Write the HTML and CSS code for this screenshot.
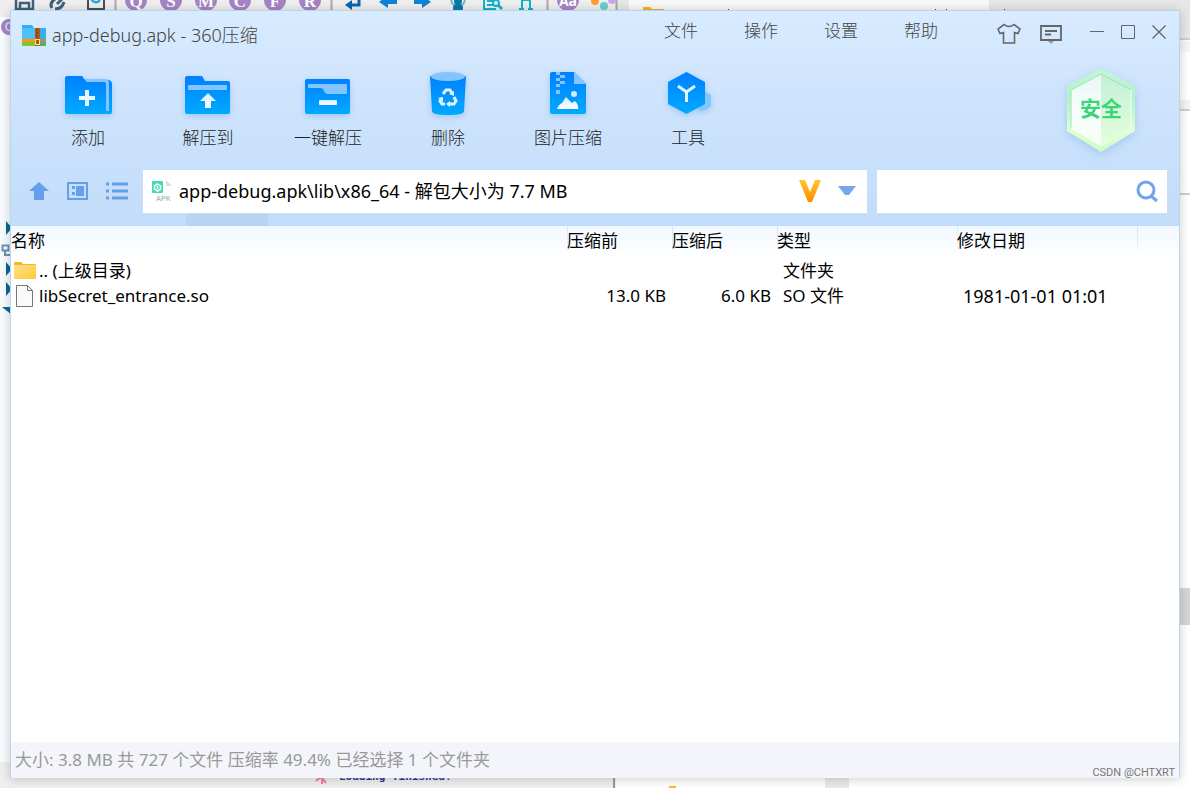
FILE: index.html
```html
<!DOCTYPE html>
<html lang="zh-CN">
<head>
<meta charset="utf-8">
<title>app-debug.apk - 360压缩</title>
<link rel="stylesheet" href="styles.css">
</head>
<body>
<div class="backdrop" aria-hidden="true">
  <svg class="backdrop-top" width="1190" height="400" viewBox="0 0 1190 400">
    <rect width="616" height="17" fill="#efefef"/>
    <rect y="17" width="616" height="383" fill="#f8fcff"/>
    <rect x="616" width="574" height="10" fill="#e7e7e7"/>
    <rect x="629" y="-6" width="360" height="24" rx="5" fill="#f8f8f8"/>
    <rect x="1172" width="18" height="38" fill="#e7e7e7"/>
    <path d="M1172 39h18M1172 110h18M1172 194h18" stroke="#cfcfcf" stroke-width="2"/>
    <rect x="1172" y="41" width="18" height="11" fill="#f6f6f6"/>
    <rect x="1172" y="100" width="18" height="9" fill="#f4f4f4"/>
    <path d="M115.500 0v10M331.500 0v10M547.500 0v10M616.500 0v10" stroke="#a8a8a8" stroke-width="2"/>
    <path d="M16 -6v15h17V-6M20 9V3h9v6" fill="none" stroke="#41617a" stroke-width="2.500"/>
    <path d="M52 8q-3-5 3-9M55 9q7 0 9-7M57 4l5-5" fill="none" stroke="#41617a" stroke-width="3"/>
    <path d="M88 0v9h16V0" fill="none" stroke="#454f58" stroke-width="2"/>
    <path d="M91-2a5 5 0 0 0 9 2" fill="none" stroke="#36a3df" stroke-width="2.500"/>
    <g fill="#a684c4"><circle cx="136" cy="0" r="11"/><circle cx="171" cy="0" r="11"/><circle cx="206" cy="0" r="11"/><circle cx="240" cy="0" r="11"/><circle cx="275" cy="0" r="11"/><circle cx="310" cy="0" r="11"/><circle cx="568" cy="0" r="11"/><circle cx="9" cy="27" r="8"/></g>
    <path d="M12 24q-5-3-6 2 0 6 6 4" fill="none" stroke="#e9dcf8" stroke-width="1.500"/>
    <g class="glyphs" text-anchor="middle"><text x="136" y="7">Q</text><text x="171" y="7">S</text><text x="206" y="7">M</text><text x="240" y="7">C</text><text x="275" y="7">F</text><text x="310" y="7">R</text><text class="glyph-aa" x="568" y="6">Aa</text></g>
    <path d="M359-4v9h-9" fill="none" stroke="#0867ae" stroke-width="3"/><path d="M345 5l7-5v10z" fill="#0867ae"/>
    <path d="M379 2l9-7v4h9v5h-9v4z" fill="#0c83d8"/><path d="M431 2l-9-7v4h-8v5h8v4z" fill="#0c83d8"/>
    <circle cx="458" cy="1" r="4" fill="#067ba6"/><path d="M451-1q1 6 4 6M465-1q-1 6-4 6" fill="none" stroke="#70b5ce" stroke-width="2"/><rect x="453" y="4" width="10" height="8" rx="4" fill="#067ba6"/>
    <path d="M484-4v13h12M487 1h7M487 5h7M522 10V0h8v10M519 9h5M528 9h5" fill="none" stroke="#12b4cb" stroke-width="2"/><circle cx="496" cy="3" r="3" fill="none" stroke="#12b4cb" stroke-width="2"/><path d="M498 5l4 4" stroke="#12b4cb" stroke-width="3"/>
    <circle cx="595" cy="1" r="4" fill="#ffa02f"/><circle cx="604" cy="6" r="4" fill="#67cfcc"/><circle cx="612" cy="0" r="4" fill="#cca6ed"/>
    <path d="M643 7h7l2 2h12v3h-21z" fill="#f3b425"/>
    <path d="M728 9.500h1M935 9.500h1M946 9.500h1M1004 9.500h1" stroke="#444"/>
    <path d="M6 221l6 7-6 7zM6 262l6 7-6 7zM6 282l6 7-6 7zM2 307h10v8z" fill="#0b6894"/>
    <path d="M2.500 245.500h6v5h-6zM5 251v4h6" fill="none" stroke="#6d91b4" stroke-width="2"/>
  </svg>
  <svg class="backdrop-bottom" width="1190" height="26" viewBox="0 0 1190 26">
    <rect width="616" height="26" fill="#efefef"/><rect x="616" width="574" height="26" fill="#fff"/>
    <path d="M614 10v16" stroke="#9b9b9b" stroke-width="2"/>
    <rect x="825" width="24" height="26" fill="#e9e9e9"/>
    <path d="M669 24h7v2h-7z" fill="#ffb91d"/>
    <path d="M314 14h16M316 19l11-9M317 10l9 11M322 8v14" stroke="#f77ca5" stroke-width="2"/>
    <text class="console-text" x="339" y="18">Loading finished!</text>
  </svg>
  <i class="backdrop-thumb"></i>
</div>
<main class="window">
  <header class="titlebar">
    <svg width="24" height="22" viewBox="0 0 24 22">
      <path d="M0 1h10l2 3h12v12H0z" fill="#35aef0"/><path d="M0 4h24v11H0z" fill="#4cc1f7"/><path d="M0 16h24v6H0z" fill="#7cc72e"/><path d="M0 15h24v3H0z" fill="#ff9418"/><path d="M13 4h5v18h-5z" fill="#b25a12"/><path d="M18 4h6v18h-6z" fill="#1588d8" opacity=".35"/><path d="M15 5v12" stroke="#70310b" stroke-width="1" stroke-dasharray="2 1"/><rect x="13.500" y="15.500" width="4" height="5" fill="#a65c0d" stroke="#ffe58a"/>
    </svg>
    <h1>app-debug.apk - 360压缩</h1>
    <nav class="menu"><button>文件</button><button>操作</button><button>设置</button><button>帮助</button></nav>
    <div class="window-tools">
      <button aria-label="皮肤"><svg width="24" height="22" viewBox="0 0 24 22"><path d="M6.500 9.500 3 10.500 1 6l6-4.500q5 4 10 0L23 6l-2 4.500-3.500-1V20h-11z" fill="none" stroke="#666" stroke-width="1.600"/></svg></button>
      <button aria-label="反馈"><svg width="22" height="20" viewBox="0 0 22 20"><path d="M1 2h20v14H1z" fill="none" stroke="#666" stroke-width="1.800"/><path d="M8 17h6l-3 3z" fill="#999"/><path d="M5 7h12M5 10.500h6" stroke="#666" stroke-width="2"/></svg></button>
    </div>
    <div class="window-controls">
      <button aria-label="最小化"><svg width="16" height="16" viewBox="0 0 16 16"><path d="M1 7.500h14" stroke="#666"/></svg></button>
      <button aria-label="最大化"><svg width="16" height="16" viewBox="0 0 16 16"><path d="M1.500 1.500h13v13h-13z" fill="none" stroke="#666"/></svg></button>
      <button aria-label="关闭"><svg width="16" height="16" viewBox="0 0 16 16"><path d="M1.500 1.500l13 13M14.500 1.500l-13 13" stroke="#666" stroke-width="1.300"/></svg></button>
    </div>
  </header>
  <section class="toolbar">
    <svg class="defs" width="0" height="0"><defs>
      <linearGradient id="blue" x2="0" y2="1"><stop stop-color="#0080ff"/><stop offset="1" stop-color="#00aaff"/></linearGradient>
      <linearGradient id="pale" x2="0" y2="1"><stop stop-color="#d0edff"/><stop offset="1" stop-color="#fff"/></linearGradient>
      <linearGradient id="gold" x2="0" y2="1"><stop stop-color="#ffc62e"/><stop offset="1" stop-color="#ff8a00"/></linearGradient>
      <linearGradient id="folder" x2="1" y2="1"><stop stop-color="#ffe18a"/><stop offset="1" stop-color="#ffca3a"/></linearGradient>
      <linearGradient id="rim" x2="0" y2="1"><stop stop-color="#c4f5da"/><stop offset=".35" stop-color="#b2f2cb"/><stop offset=".75" stop-color="#deffd2"/><stop offset="1" stop-color="#cffbc5"/></linearGradient>
      <linearGradient id="faceleft" x2="0" y2="1"><stop stop-color="#e8f7f4"/><stop offset=".5" stop-color="#f7fdfb"/><stop offset="1" stop-color="#f6fff4"/></linearGradient>
      <linearGradient id="faceright" x2="0" y2="1"><stop stop-color="#c2efdc"/><stop offset="1" stop-color="#e5ffd9"/></linearGradient>
    </defs></svg>
    <button><svg width="48" height="48" viewBox="0 0 48 48"><path d="M1 8q0-2 2-2h15l3 4h24q3 1 3 4v28q0 2-2 2H3q-2 0-2-2z" fill="url(#blue)"/><path d="M21 9h20q4 0 4 4v28h-3V14q0-2-2-2H22z" fill="#83c5ff"/><path d="M23 20v16M15 28h16" stroke="#e6f7ff" stroke-width="4"/></svg><span>添加</span></button>
    <button><svg width="48" height="48" viewBox="0 0 48 48"><path d="M1 8q0-2 2-2h15l3 5h23q2 0 2 2v29q0 2-2 2H3q-2 0-2-2z" fill="url(#blue)"/><path d="M4 16q0-1 1-1h37q1 0 1 1v4H4z" fill="#83c5ff"/><path d="M24 23l8 8h-5v7h-6v-7h-5z" fill="url(#pale)"/></svg><span>解压到</span></button>
    <button><svg width="48" height="48" viewBox="0 0 48 48"><rect x="1" y="9" width="45" height="35" rx="2" fill="url(#blue)"/><path d="M4 15q0-1 1-1h37q1 0 1 1v9H24q-3 0-4-3-1-3-4-3H4z" fill="#83c5ff"/><rect x="15" y="30" width="18" height="5" rx="1" fill="url(#pale)"/></svg><span>一键解压</span></button>
    <button><svg width="48" height="48" viewBox="0 0 48 48"><path d="M6 6h36l-2 35q0 4-16 4T8 41z" fill="url(#blue)"/><ellipse cx="24" cy="6.500" rx="17" ry="4.500" fill="#83c5ff"/><g fill="none" stroke="#dff4ff" stroke-width="3"><path d="M19 24l3-4h4l2 3M30 27l2 4-2 3h-4M21 34h-3l-2-3 2-3"/></g><path d="M25 24l5-3v5zM26 31v6l-4-3zM14 28l5-1v5z" fill="#dff4ff"/></svg><span>删除</span></button>
    <button><svg width="48" height="48" viewBox="0 0 48 48"><path d="M6 4q0-2 2-2h22l12 12v28q0 2-2 2H8q-2 0-2-2z" fill="url(#blue)"/><path d="M30 2l12 12H30z" fill="#83c5ff"/><path d="M12 2h4v3h5v3h-5v3h5v3h-5v3h-4v-3h4v-3h-4V8h4V5h-4zM12 20h4v4h-4z" fill="#83c5ff"/><circle cx="30" cy="24" r="3" fill="#c8edff"/><path d="M13 39q1-4 5-6l4-6 6 6 3-2q4 4 3 8z" fill="url(#pale)"/></svg><span>图片压缩</span></button>
    <button><svg width="48" height="48" viewBox="0 0 48 48"><path d="M41 22q6 2 6 4v8q0 3-4 5-5 3-9 1-1-2 3-4 4-2 4-6z" fill="#83c5ff"/><path d="M22.500 2 41 12v22L22.500 44 4 34V12z" fill="url(#blue)"/><path d="M14 16l8.500 6L31 16M22.500 22v10" fill="none" stroke="#dff4ff" stroke-width="3"/></svg><span>工具</span></button>
    <div class="badge"><svg width="70" height="86" viewBox="0 0 70 86"><path d="M35 1l34 18v45L35 85 1 64V19z" fill="url(#rim)"/><path d="M35 7 5 23v38l30 18z" fill="url(#faceleft)"/><path d="M35 7l30 16v38L35 79z" fill="url(#faceright)"/><path d="M5 61V23L35 7l30 16" fill="none" stroke="#9de5ae" stroke-width="1"/><path d="M65 23v38L35 79 5 61" fill="none" stroke="#f5fff2" stroke-width="1"/></svg><strong>安全</strong></div>
  </section>
  <section class="navigation">
    <div class="view-buttons">
      <button aria-label="上级目录"><svg width="22" height="20" viewBox="0 0 22 20"><path d="M11 1l10 9h-5v9H6v-9H1z" fill="#659eea"/></svg></button>
      <button aria-label="预览视图"><svg width="22" height="20" viewBox="0 0 22 20"><path d="M1 2h19v16H1z" fill="none" stroke="#659eea" stroke-width="2"/><path d="M5 5h3v3H5zM5 11h3v3H5zM9 5h8v10H9z" fill="#659eea"/></svg></button>
      <button aria-label="列表视图"><svg width="22" height="20" viewBox="0 0 22 20"><path d="M0 3h3M6 3h16M0 10h3M6 10h16M0 17h3M6 17h16" stroke="#659eea" stroke-width="3"/></svg></button>
    </div>
    <div class="address">
      <svg width="22" height="24" viewBox="0 0 22 24"><rect x="1" y="2" width="11" height="12" rx="1" fill="#42dbb6"/><path d="M6.500 5l3 2v3l-3 2-3-2V7zM6.500 7v3" fill="none" stroke="#fff" stroke-width="1.500"/><path d="M15 1l6 6h-6z" fill="#ddd"/><text class="apk-label" x="5" y="22">APK</text></svg>
      <input type="text" aria-label="路径" value="app-debug.apk\lib\x86_64 - 解包大小为 7.7 MB">
      <svg width="24" height="22" viewBox="0 0 24 22"><path d="M1 0h6l5 12 5-12h6l-9 22h-4z" fill="url(#gold)"/></svg>
      <button aria-label="展开路径"><svg width="18" height="10" viewBox="0 0 18 10"><path d="M0 0h18L11 9H7z" fill="#75a6ee"/></svg></button>
    </div>
    <form class="search"><input type="search" aria-label="搜索"><button type="button" aria-label="搜索"><svg width="24" height="24" viewBox="0 0 24 24"><circle cx="11" cy="10" r="8" fill="none" stroke="#70a3eb" stroke-width="3"/><path d="M16 16l6 5" stroke="#70a3eb" stroke-width="3"/></svg></button></form>
    <i class="nav-mark"></i>
  </section>
  <section class="files">
    <table>
      <colgroup><col><col class="size"><col class="size"><col class="wide"><col class="wide"><col class="end"></colgroup>
      <thead><tr><th>名称</th><th>压缩前</th><th>压缩后</th><th>类型</th><th>修改日期</th><th></th></tr></thead>
      <tbody>
        <tr><td><div class="file"><svg width="24" height="22" viewBox="0 0 24 22"><path d="M1 3q0-1 1-1h6l2 2h12q1 0 1 1v3H1z" fill="#f7b51b"/><rect x="1" y="5" width="22" height="14" rx="1" fill="url(#folder)"/></svg>.. (上级目录)</div></td><td></td><td></td><td>文件夹</td><td></td><td></td></tr>
        <tr><td><div class="file"><svg width="24" height="22" viewBox="0 0 24 22"><path d="M3.500.500h11l5 5v16h-16zM14.500.500v5h5" fill="#fafafa" stroke="#777"/></svg>libSecret_entrance.so</div></td><td class="number">13.0 KB</td><td class="number">6.0 KB</td><td>SO 文件</td><td class="date">1981-01-01 01:01</td><td></td></tr>
      </tbody>
    </table>
  </section>
  <footer class="status"><span>大小: 3.8 MB 共 727 个文件 压缩率 49.4% 已经选择 1 个文件夹</span><small>CSDN @CHTXRT</small></footer>
</main>
</body>
</html>
```

FILE: styles.css
```css
* { box-sizing: border-box; }
body {
  margin: 0;
  min-height: 100vh;
  padding: 10px;
  display: flex;
  position: relative;
  overflow: hidden;
  background: #fff;
  color: #000;
  font: 400 17px/24px "Noto Sans", "Noto Sans CJK SC", sans-serif;
}
button, input { font: inherit; color: inherit; border: 0; padding: 0; margin: 0; background: none; outline: none; }
button { display: flex; align-items: center; justify-content: center; }
svg { display: block; flex: none; }
.backdrop { position: absolute; inset: 0; overflow: hidden; background: linear-gradient(90deg, #f8fcff 50%, #fff 50%); }
.backdrop-top { position: absolute; top: 0; left: 0; }
.backdrop-bottom { position: absolute; bottom: 0; left: 0; }
.backdrop-thumb { position: absolute; right: 0; top: 588px; width: 12px; height: 37px; background: #d6d6d6; }
.glyphs { font: bold 17px "Liberation Serif", serif; fill: #fff; }
.glyph-aa { font: bold 14px "Open Sans", sans-serif; }
.console-text { font: bold 11px "DejaVu Sans Mono", monospace; fill: #3438a0; }
.window {
  position: relative;
  flex: 1;
  min-width: 0;
  display: flex;
  flex-direction: column;
  border: 1px solid #b9d4ef;
  border-bottom: 0;
  background: linear-gradient(#d8ebff 0, #cfe4fd 80px, #c2ddf9 215px, #fff 215px);
  box-shadow: 0 1px 10px #0003;
}
.titlebar { display: flex; height: 48px; padding-left: 11px; align-items: center; color: #666; }
.titlebar h1 { flex: 1; margin: 0 0 0 6px; font-size: 18px; font-weight: 300; color: #444; }
.menu { display: flex; padding-bottom: 8px; font-weight: 300; color: #444; }
.menu button { width: 80px; }
.window-tools { display: flex; margin-left: 27px; padding-bottom: 2px; }
.window-tools button { width: 42px; height: 36px; }
.window-controls { display: flex; margin-left: 9px; padding: 0 5px 6px 0; }
.window-controls button { width: 31px; height: 30px; }
.toolbar { display: flex; height: 96px; padding-left: 17px; position: relative; color: #222; font-weight: 300; }
.toolbar > button { width: 120px; flex-direction: column; justify-content: flex-start; padding-top: 11px; gap: 8px; }
.toolbar > button svg { filter: drop-shadow(0 2px 3px #3a93f055); }
.defs { position: absolute; }
.badge { display: grid; place-items: center; width: 70px; height: 86px; margin: 8px 43px 0 auto; filter: drop-shadow(0 3px 5px #84b4ea88); }
.badge > * { grid-area: 1 / 1; }
.badge strong { z-index: 1; padding-bottom: 6px; color: #3bd578; font: bold 21px/24px "Noto Sans CJK SC", sans-serif; }
.navigation { position: relative; display: flex; gap: 8px; height: 71px; padding: 14px 11px 12px 17px; }
.nav-mark { position: absolute; left: 175px; bottom: 0; width: 82px; height: 12px; background: #b9d4f0; }
.view-buttons { display: flex; flex: none; width: 106px; gap: 17px; padding-bottom: 2px; }
.address, .search { display: flex; align-items: center; background: #fff; border: 1px solid #c8def5; }
.address { flex: 5 1 0; min-width: 0; padding: 0 11px 2px 8px; }
.address input { flex: 1; min-width: 0; margin: 0 8px 0 6px; font-size: 18px; }
.address button { margin-left: 16px; }
.search { flex: 2 1 0; min-width: 0; padding-right: 8px; }
.search input { flex: 1; min-width: 0; }
.apk-label { font: bold 7px "Liberation Sans", sans-serif; fill: #bbb; }
.files { flex: 1; background: #fff; }
table { width: 100%; table-layout: fixed; border-collapse: collapse; }
.size { width: 105px; }
.wide { width: 180px; }
.end { width: 42px; }
thead { background: linear-gradient(#f1f8ff, #fff); }
th { height: 32px; padding: 0 0 2px; text-align: left; font-weight: 400; background: linear-gradient(#cfe6fb, #e9f4ff) 0 0 / 1px 24px no-repeat; }
th:first-child { background: none; }
td { height: 25px; padding: 0 6px; white-space: nowrap; }
td:first-child { padding-left: 2px; }
.file { display: flex; align-items: center; gap: 2px; }
.number { text-align: right; }
.date { font-size: 18px; }
.status { display: flex; align-items: center; height: 36px; padding: 0 4px; background: #f3f5fa; color: #999; }
.status span { flex: 1; }
.status small { align-self: flex-end; font: 11px/10px Roboto, sans-serif; color: #777; }
```
